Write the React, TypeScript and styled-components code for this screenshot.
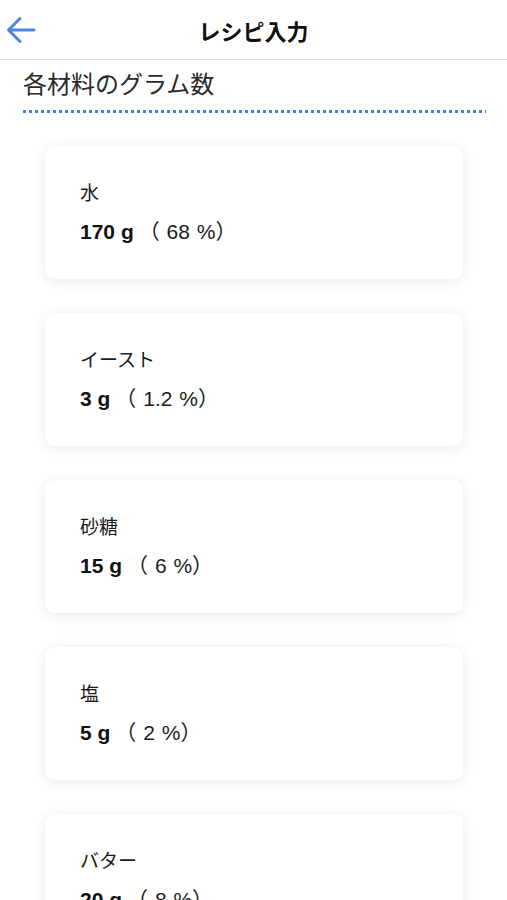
import React, { FC } from 'react';
import styled, { createGlobalStyle } from 'styled-components';

const GlobalStyle = createGlobalStyle`
  body {
    margin: 0;
    background: #fff;
    font-family: 'Noto Sans CJK JP', sans-serif;
    color: #1c1c1c;
  }
`;

const Header = styled.header`
  display: grid;
  grid-template-columns: 60px 1fr 60px;
  align-items: center;
  height: 59px;
  border-bottom: 1px solid #dedede;
`;

const BackButton = styled.button`
  display: flex;
  align-items: center;
  padding: 0 0 0 6px;
  border: none;
  background: none;
  height: 100%;
`;

const Title = styled.h1`
  margin: 0;
  text-align: center;
  font-size: 22px;
  font-weight: bold;
  color: #111;
`;

const Section = styled.section`
  padding: 0 21px 0 23px;
`;

const SectionTitle = styled.h2`
  margin: 0;
  padding: 6px 0 11px;
  font-size: 24px;
  line-height: 33px;
  font-weight: normal;
  color: #2a2a2a;
`;

const Dotted = styled.div`
  height: 3px;
  background-image: repeating-linear-gradient(
    to right,
    #4a7fd6 0 3px,
    transparent 3px 6px
  );
`;

const CardList = styled.div`
  display: flex;
  flex-direction: column;
  gap: 34px;
  padding: 33px 44px 40px 45px;
`;

const Card = styled.div`
  background: #fff;
  border-radius: 10px;
  box-shadow: 0 2px 14px rgba(0, 0, 0, 0.09);
  padding: 34px 35px;
  display: flex;
  flex-direction: column;
  gap: 15px;
`;

const Name = styled.div`
  font-size: 19px;
  line-height: 24px;
  color: #1c1c1c;
`;

const Value = styled.div`
  font-family: 'Liberation Sans', 'Noto Sans CJK JP', sans-serif;
  font-size: 21px;
  line-height: 26px;
  color: #111;
`;

const Grams = styled.span`
  font-weight: bold;
  margin-right: 5px;
`;

const Percent = styled.span`
  color: #1c1c1c;
  word-spacing: 1px;
`;

interface Ingredient {
  name: string;
  grams: number;
  percent: string;
}

const ingredients: Ingredient[] = [
  { name: '水', grams: 170, percent: '68' },
  { name: 'イースト', grams: 3, percent: '1.2' },
  { name: '砂糖', grams: 15, percent: '6' },
  { name: '塩', grams: 5, percent: '2' },
  { name: 'バター', grams: 20, percent: '8' },
];

const BackArrow: FC = () => (
  <svg width="30" height="28" viewBox="0 0 30 28" fill="none">
    <path
      d="M28 14H3M14 2.5L2.5 14L14 25.5"
      stroke="#4a86e8"
      strokeWidth="3"
      strokeLinecap="round"
      strokeLinejoin="round"
    />
  </svg>
);

const App: FC = () => (
  <>
    <GlobalStyle />
    <Header>
      <BackButton aria-label="戻る">
        <BackArrow />
      </BackButton>
      <Title>レシピ入力</Title>
      <div />
    </Header>
    <Section>
      <SectionTitle>各材料のグラム数</SectionTitle>
      <Dotted />
    </Section>
    <CardList>
      {ingredients.map((item) => (
        <Card key={item.name}>
          <Name>{item.name}</Name>
          <Value>
            <Grams>{item.grams} g</Grams>
            <Percent>（ {item.percent} %）</Percent>
          </Value>
        </Card>
      ))}
    </CardList>
  </>
);

export default App;
